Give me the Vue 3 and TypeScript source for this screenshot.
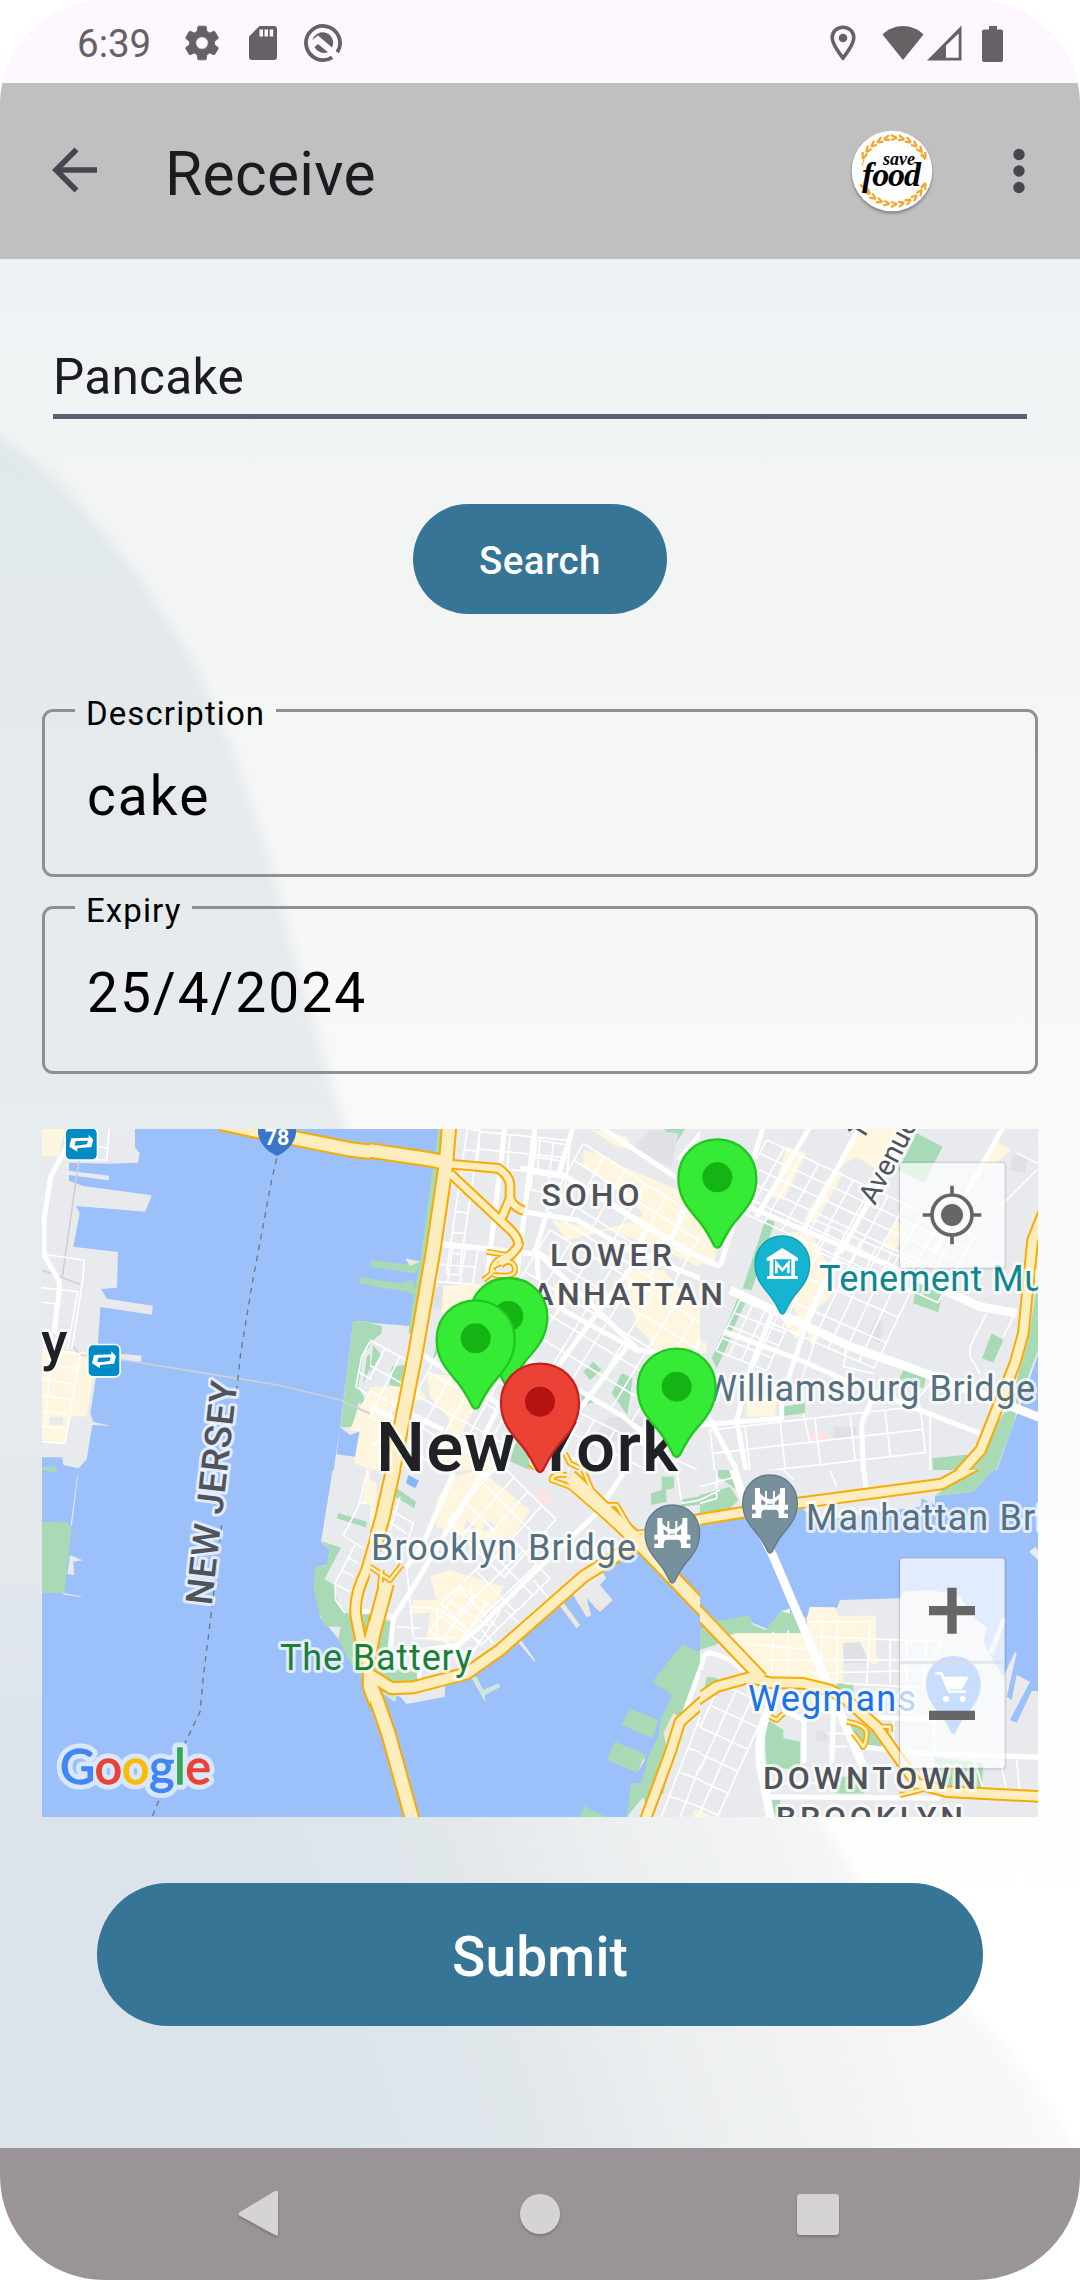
<script setup lang="ts">
interface Shape { c: string; d: string }
interface Tile { x: number; y: number; shapes: Shape[]; roads: Shape[]; highways: Shape[] }
interface Label { t: string; x: number; y: number; c: string; len?: number; rot?: number; size?: number }

// Street grid: nu lines stepped along u (each spanning v * nv) and the other way round.
function grid(ox: number, oy: number, ux: number, uy: number, vx: number, vy: number, nu: number, nv: number): string {
  let d = ''
  for (let i = 0; i <= nu; i++) d += `M${ox + ux * i} ${oy + uy * i}l${vx * nv} ${vy * nv}`
  for (let j = 0; j <= nv; j++) d += `M${ox + vx * j} ${oy + vy * j}l${ux * nu} ${uy * nu}`
  return d
}

const tiles: Tile[] = [
  {
    x: 0, y: 0,
    shapes: [
      { c: 'water', d: 'M0 0H1050V1080H0Z' },
      { c: 'land', d: 'M0 0H315V82L329 100 324 128 235 131 117 128V152L237 167 236 181 117 165V182L160 198 365 226 346 275 138 258 149 280 130 380 264 396 261 503 213 507 231 536 368 557 366 584 211 561 202 695 335 707 333 725 260 720 200 760 181 880 190 905 243 918 187 915 170 1018 146 1045 100 1035 97 1012H0Z' },
      { c: 'com', d: 'M36 27H105L85 110 36 108Z M36 687L202 700 180 830 170 890 125 887 105 970 36 960Z' },
      { c: 'land', d: 'M60 890H100L98 915H60Z' },
      { c: 'green', d: 'M30 1040H78V1050H30Z M1023 417H1050V445L1020 440Z M990 470L1050 483V500L988 490Z' },
      { c: 'land', d: 'M970 603L1050 607V1060H910L918 1000 930 925Z' },
      { c: 'green', d: 'M970 603L1050 607V650L1000 700 985 800 1010 850 985 850 967 920 932 922 940 850Z M1050 675L1010 710 1000 790Z' },
      { c: 'com', d: 'M1050 770L985 870 960 930 990 935 972 1030 1050 1060Z' },
      { c: 'water', d: 'M930 922L960 945 988 935 975 1010 920 1003Z' },
    ],
    roads: [
      { c: 'rail', d: 'M147 120L97 470M36 450L150 493M130 680L150 705 280 720 620 775 745 795 930 840 1050 895' },
      { c: 'st', d: 'M238 20L230 120 185 118M205 80L235 85M36 402L162 420 158 480 125 690M36 503L143 515 112 690M36 546L75 552M80 690L150 702 105 970 36 965M60 760L45 920M36 735L145 745M36 775L130 793M36 825L120 838M36 873L110 883M36 918L108 927' },
      { c: 'st', d: 'M1050 645L1020 665 995 710 978 800 1050 850M1020 665L1050 680M985 755L1040 790M1050 760L1000 850' },
      { c: 'av', d: 'M110 80L62 170 42 300 42 405 88 485 88 510 72 640' },
      { c: 'border', d: 'M740 115L725 180 665 500 632 700 620 810' },
    ],
    highways: [{ c: 'w46', d: 'M570 8L680 32 960 88 1060 100' }],
  },
  {
    x: 1020, y: 0,
    shapes: [
      { c: 'land', d: 'M0 0H1050V1080H0Z' },
      { c: 'water', d: 'M0 0H207L200 95 158 418 122 618 0 608Z' },
      { c: 'green', d: 'M207 20H222L135 640H115L135 500 150 430 190 130Z M5 420L100 432 155 425 135 460 0 440Z M0 477L90 490 130 480 135 530 115 515 0 497Z M0 610L35 618V640L0 668Z M10 675L33 705 0 755Z M65 740L105 735 90 800 58 795Z M205 640L240 700 190 715Z M430 950L470 965 480 1050 410 1020Z M670 725L695 750 660 780 640 755Z M755 760L788 775 772 885 725 820Z M1050 660L1025 740 1050 750Z M880 27H945L920 65Z M630 820L675 845 640 855Z' },
      { c: 'com', d: 'M640 90L700 105 760 140 925 210 1050 300V470L900 400 720 330 590 360 545 300 700 330 800 300 820 280 740 210 640 140Z M660 27L770 50 790 90 740 80Z M760 450L880 450 960 540 1050 580V650L880 700 800 620Z M830 640L980 640 960 690 850 690Z M215 500L340 490 320 550 215 580Z M0 800L140 800 170 830 60 880 100 1050H0Z M170 760L290 770 330 830 270 950 400 1050H180L240 900 180 830Z M550 490L620 500 560 590Z' },
      { c: 'dark', d: 'M840 30L925 40 905 140 780 95Z M180 500L220 500 215 570 170 560Z M720 890L830 890 800 950 640 990Z' },
      { c: 'tan', d: 'M105 415L152 425 120 437Z' },
    ],
    roads: [
      { c: 'st', d: grid(292, 27, 38, 4, -9, 62, 1, 7) + grid(330, 35, 90, 9, -4, 52, 3, 2) + grid(500, 60, 50, 8, -6, 50, 2, 3) },
      { c: 'st', d: grid(540, 330, 62, 38, -38, 62, 8, 5) + grid(640, 70, 62, 40, -28, 50, 6, 4) + grid(250, 620, 58, 32, -38, 68, 5, 5) },
      { c: 'st', d: grid(610, 870, 62, 30, -30, 58, 6, 3) + grid(0, 660, 45, 25, -30, 60, 3, 4) + grid(210, 380, 38, 3, -8, 52, 3, 2) },
      { c: 'av', d: 'M405 20L352 470M495 20L440 470M610 20L565 165M530 280L500 380 505 480M690 20L1050 260M450 145L580 165 1050 450M205 370L490 402M460 275L620 300 760 380 1050 500M490 385L800 685M150 700L430 880M560 560L800 690 880 700M120 880L220 930M340 950L430 780M1010 20L925 120M940 270L890 390M800 420L540 770M820 340L800 420M440 700L760 890 830 950M770 680L620 880 500 1050M1040 560L960 720M0 860L80 900M240 180L270 195' },
    ],
    highways: [
      { c: 'w12', d: 'M350 395L410 405 455 375M410 405Q360 425 365 460L340 480M370 465Q440 475 435 445T390 430T375 455M585 1000L600 1030 640 1050M480 1030L500 1050' },
      { c: 'w28', d: 'M240 160L400 310Q460 360 440 385T390 430M235 132L385 145Q420 170 420 195V235L395 295M420 235Q430 262 462 272' },
      { c: 'w46', d: 'M238 10L228 130 190 390 138 690 97 900 65 1070M-10 90L180 118 228 128' },
    ],
  },
  {
    x: 2010, y: 0,
    shapes: [
      { c: 'land', d: 'M0 0H1050V1080H0Z' },
      { c: 'green', d: 'M197 297L225 305 155 510 128 505Z M112 537L138 545 95 635 75 628Z M65 645L92 655 50 745 35 715Z M650 40L728 80 672 190 595 150Z M650 485L730 505 715 577 640 550Z M875 640L910 660 880 728 846 715Z M610 750L678 770 670 805 597 780Z M245 860L315 850V880L247 888Z M697 1015L840 1000V1060H700Z M1014 470V690L950 860 945 900 885 1060H800L930 850 985 660Z' },
      { c: 'water', d: 'M1030 660V1080H880L945 900Z' },
      { c: 'com', d: 'M260 80L320 100 250 240 215 230Z M480 27H640L560 170 470 110 400 150Z M400 150L430 160 345 310 310 300Z M260 340L330 330 400 470 400 520 370 550 300 610 270 530Z M140 830L230 830 225 890 140 890Z M590 300L620 340 580 395 550 380Z M880 60L935 90 850 160Z M0 300L60 340 40 440 0 430Z M320 620L360 640 335 680Z M240 590L310 630 290 660Z M0 660L20 670V700H0Z' },
      { c: 'dark', d: 'M940 100L985 110 975 160 930 150Z M530 590L550 610 540 670 500 650Z M400 920L470 920V950L400 960Z' },
      { c: 'pink', d: 'M340 930L387 938 385 965 328 962Z' },
    ],
    roads: [
      { c: 'st', d: grid(200, 60, 52, 24, -22, 40, 12, 5) + grid(345, 300, 46, 20, -36, 76, 7, 4) },
      { c: 'st', d: grid(120, 540, 38, 15, -18, 38, 4, 4) + grid(30, 930, 105, -12, 8, 70, 6, 2) + 'M350 650L300 790M440 690L430 740 520 760M860 580L810 680V710L840 760M940 590L910 650M780 520L860 560M710 770L650 840M690 890V1050M310 880L330 970M0 760L60 790M950 100L1014 130M880 280L1010 150' },
      { c: 'av', d: 'M190 20L120 250 60 440M330 20L170 290M480 20L310 330M600 80L420 400M910 20L700 400M120 250L430 380 600 450M0 410L60 440M220 570L150 750 110 900 140 1060M420 380L310 640 260 790M75 635L300 720 480 800 840 940M520 830L485 910 490 1060M0 915L245 895 245 830M20 880L110 1050' },
      { c: 'av2', d: 'M600 450L840 560 950 580M90 510L260 590 450 680 620 740 860 830 1030 897' },
    ],
    highways: [{ c: 'w36', d: 'M1040 255L998 360 970 640 945 730 842 990 770 1070' }],
  },
  {
    x: 0, y: 1050,
    shapes: [
      { c: 'water', d: 'M0 0H1050V1080H0Z' },
      { c: 'green', d: 'M36 155L110 157 125 170 103 370 36 368Z M45 0H80L75 8Z' },
      { c: 'land', d: 'M120 255L158 271 130 275 132 315 112 312Z M142 15L122 165 126 165 144 15Z M100 369L153 379V381L100 374Z' },
      { c: 'land', d: 'M908 0H1060V560H970L870 440 860 290 890 285 900 240 873 215Z' },
      { c: 'green', d: 'M873 213L933 233 883 328 913 345 925 400 950 430 1060 430V640L1000 630 950 560 925 510 932 470 885 470 868 430 850 350 857 290 888 287 900 240Z M925 130L1010 155 1008 172 920 145Z' },
      { c: 'com', d: 'M1015 0L1060 5V105L995 95Z' },
    ],
    roads: [
      { c: 'st', d: 'M1015 -5L985 110 940 197 1000 235M975 225L915 340 917 390 945 430M950 260L985 280M935 300L970 320M920 345L960 365M990 97L1040 105' },
      { c: 'av', d: 'M990 425H1030' },
      { c: 'border', d: 'M575 165L545 420 520 620 510 725 460 830 385 995 365 1045' },
    ],
    highways: [
      { c: 'w36', d: 'M1075 70L1010 300Q970 380 978 440L992 510 1015 590M1075 290L1010 540' },
      { c: 'w46', d: 'M1010 520L1020 600V650L1080 810' },
    ],
  },
  {
    x: 1020, y: 1050,
    shapes: [
      { c: 'water', d: 'M0 0H1050V1080H0Z' },
      { c: 'land', d: 'M0 0H1060V150L980 165 830 190 700 310 708 325 690 345 728 390 690 425 650 385 663 435 650 442 610 375 565 400 440 510 310 610 225 650V680L110 702 90 680 0 640Z' },
      { c: 'tan', d: 'M565 402L582 400 630 465 620 475Z M615 385H635L663 435 652 441Z M668 405L700 400 728 390 690 425Z' },
      { c: 'land', d: 'M440 512H455L495 570V577Z' },
      { c: 'com', d: 'M200 90L250 20 330 0 480 120 430 200 330 210 200 170Z M180 320L240 300 400 350 380 400 270 520 170 510 180 430 120 430 130 390 200 390Z M0 30L20 40V160L0 170Z' },
      { c: 'land', d: 'M290 150L320 175 280 180Z M345 150L380 165 340 185Z' },
      { c: 'green', d: 'M80 55L138 95 133 115 75 80Z M45 450L65 455 55 540 20 560 10 540Z M15 590L145 605 140 640 60 640 10 620Z M875 20H912V55L888 60 890 95 843 105V70L875 60Z M930 90L1060 65V95L935 110Z' },
      { c: 'lgreen', d: 'M302 620L320 620 340 660 385 640 392 650 345 675V695Z M30 665L80 675 75 697Z M120 580H145V605H120Z' },
      { c: 'land', d: 'M1060 490V1080H770L785 940 830 950 920 730 1000 560Z' },
      { c: 'green', d: 'M938 522L985 545 1060 440V540L1005 560 930 750 880 970 825 1000 820 980 770 1041 785 940 815 940 835 860 865 800 870 755 905 675 847 635Z M780 716L865 750 847 805 755 765Z M735 815L830 855 800 908 710 868Z M643 1008L715 1045H628Z M1010 620L1050 610V660L1000 660Z' },
      { c: 'com', d: 'M970 1020L1060 1035V1060H970Z' },
      { c: 'tan', d: 'M910 730L930 740 890 830 880 790Z M820 865L825 870 803 905Z' },
      { c: 'lake', d: 'M115 15L147 32 135 55 108 40Z' },
      { c: 'pink', d: 'M515 48L548 88 525 115 495 78Z' },
    ],
    roads: [
      { c: 'st', d: grid(390, -20, 42, 42, -52, 58, 4, 3) + grid(420, 200, 40, 42, -52, 50, 3, 4) + grid(270, 350, 40, 25, -30, 45, 3, 3) },
      { c: 'st', d: 'M110 290L130 500M120 410L200 415 290 470M200 415V510M130 505H260M60 120L130 160 110 220M50 150L110 190M90 80L60 180M80 470L150 475M300 340L310 400 280 430M335 480L370 520M405 420L470 480M490 330L540 390M920 0L935 100M935 100L1050 80' },
      { c: 'st', d: grid(1010, 690, 50, 18, -28, 72, 3, 5) },
      { c: 'av', d: 'M250 10L160 220 110 290M350 -10L220 200 130 350 70 445 60 540M50 435L75 445M760 10L700 100M680 130L500 300 330 470 265 525 130 545M145 570L150 630M1060 545H1010L935 750M330 20L370 0' },
    ],
    highways: [
      { c: 'w12', d: 'M590 15Q545 10 545 30L600 50 790 215M640 0L665 60 790 190 825 185M690 120L720 150M715 105H740L790 190M0 290L60 330 95 285M30 350L35 300' },
      { c: 'w46', d: 'M72 -10L38 140 10 240M50 340L10 490 -15 620M-10 620L20 690 55 790 130 1060' },
      { c: 'w40', d: 'M0 615L65 655 130 652 290 610 390 540 640 320 720 270 830 200 980 152 1070 132' },
      { c: 'w36', d: 'M1070 652L1020 675 930 755 900 850 822 1060' },
      { c: 'w46', d: 'M600 20L790 200 1070 490' },
    ],
  },
  {
    x: 2010, y: 1050,
    shapes: [
      { c: 'water', d: 'M0 0H1050V1080H0Z' },
      { c: 'land', d: 'M0 0H880L820 65 705 78V105L665 85 663 110 500 130 350 155 290 100 0 160Z' },
      { c: 'green', d: 'M815 0H880L822 65 705 77 740 50Z M50 0H100L110 60 55 20Z M0 75L90 50 115 90 90 115 0 130Z' },
      { c: 'land', d: 'M0 530L45 525 145 440 160 460 210 480 245 420 320 445 330 410 410 415 420 390 600 385 610 365 690 360 750 370 780 380 830 450 860 470 850 520 910 620 945 545 950 550 920 680 935 690 950 615 990 635 930 750 950 758 995 663H1014V1080H0Z' },
      { c: 'land', d: 'M905 445L918 447 880 555 865 545Z M1005 230L1014 240V270L988 245Z' },
      { c: 'green', d: 'M0 480L20 460 145 435 160 465 195 480 245 420 325 450 310 490 110 490 45 525 0 540Z M190 740L250 780V805L300 815V900L200 890Z M410 640H460V665H410Z M20 620L55 625 10 670Z M430 750L545 790V830L480 840 490 870Z M700 860L850 880 845 960 720 950Z M200 990H240V1050H210Z M400 930L500 900 490 970 410 970Z' },
      { c: 'com', d: 'M110 490L330 490 320 450 330 412H405L415 437 527 438 528 560 537 575 525 583 480 570 430 515V640H200L110 560 70 500Z M0 1020L50 1050H0Z M245 425L270 415V430Z' },
      { c: 'dark', d: 'M430 520L480 515 510 580 430 580Z M350 780L380 790 385 820 345 810Z' },
    ],
    roads: [
      { c: 'st', d: grid(60, 640, 48, 22, -30, 66, 3, 6) + 'M0 50L110 20M0 100L50 85 50 0M320 455H510M368 450L362 590M412 450L410 640M510 455L500 640M220 485L215 610M265 480V610M340 500L725 515 700 560M130 520L330 540M200 570L700 570M330 610L700 600M430 640L700 655M680 515L670 650M620 510V650M570 505V640M385 790H440M385 830H440M580 740V850M700 750L705 860M900 870L920 960M950 870L960 970M820 860L850 960M210 940H420M250 0L280 30M390 0L410 50M0 90L60 60' },
      { c: 'av', d: 'M490 -10L500 70M0 600L10 560Q20 545 40 550L90 570 150 615M250 720L312 750V880M400 740L395 880M500 740L710 750M490 830L650 850 1020 862M210 980L720 985M380 650L400 740' },
      { c: 'av2', d: 'M205 720Q170 800 182 890L215 1060M95 -15L130 80 220 260 390 660 430 750 490 890' },
    ],
    highways: [
      { c: 'w12', d: 'M210 740L230 750 250 730M440 755Q500 765 500 790T490 830L460 790M540 770H570V785M600 975L700 950M75 635L150 625' },
      { c: 'w40', d: 'M-30 400L185 625' },
      { c: 'w36', d: 'M-10 690L50 650 150 622 210 638 310 640 390 660 440 690 530 770 650 940 740 965 1030 980M-10 150L290 100 725 42 830 -15' },
    ],
  },
]

const labels: Label[] = [
  { t: 'SOHO', x: 541.5, y: 1206, c: 'area', len: 98 },
  { t: 'LOWER', x: 550, y: 1265.5, c: 'area', len: 122 },
  { t: 'MANHATTAN', x: 501, y: 1304.5, c: 'area', len: 222 },
  { t: 'DOWNTOWN', x: 763, y: 1789, c: 'area', len: 213 },
  { t: 'BROOKLYN', x: 776, y: 1829, c: 'area', len: 187 },
  { t: 'New York', x: 376, y: 1471, c: 'city', len: 302 },
  { t: 'y', x: 41, y: 1360, c: 'city small' },
  { t: 'Tenement Mu', x: 819, y: 1290.5, c: 'poi teal', len: 225 },
  { t: 'Williamsburg Bridge', x: 705, y: 1400.5, c: 'poi slate', len: 330 },
  { t: 'Manhattan Bri', x: 806, y: 1530, c: 'poi slate', len: 239 },
  { t: 'Brooklyn Bridge', x: 371, y: 1559.5, c: 'poi slate', len: 265 },
  { t: 'The Battery', x: 280, y: 1670, c: 'poi park', len: 192 },
  { t: 'Wegmans', x: 748, y: 1711, c: 'poi blue', len: 168 },
  { t: 'NEW JERSEY', x: 211.5, y: 1606, c: 'state', len: 225, rot: -83.4 },
  { t: 'Avenue A', x: 875, y: 1206, c: 'street', rot: -62.3 },
]

const pins = [
  { x: 1435, y: 588, red: false },
  { x: 1337, y: 655, red: false },
  { x: 1530, y: 845, red: true },
  { x: 1940, y: 800, red: false },
  { x: 2062, y: 172, red: false },
]
const pinPath = 'M0-114C65-114 117-65 117 3C117 52 96 84 67 117C34 152 20 184 9 206Q0 216-9 206C-20 184-34 152-67 117C-96 84-117 52-117 3C-117-65-65-114 0-114Z'

const leaves = Array.from({ length: 11 }, (_, i) => -62 + i * 12.4)
const fields = [
  { label: 'Description', value: 'cake' },
  { label: 'Expiry', value: '25/4/2024' },
]
const googleLetters = [
  ['G', '#4285f4'], ['o', '#ea4335'], ['o', '#fbbc04'], ['g', '#4285f4'], ['l', '#34a853'], ['e', '#ea4335'],
]
</script>

<template>
  <div class="phone">
    <header class="status">
      <span class="time">6:39</span>
      <svg class="gear" width="42" height="42" viewBox="0 0 24 24"><path d="M19.14 12.94c.04-.3.06-.61.06-.94s-.02-.64-.07-.94l2.03-1.58a.49.49 0 0 0 .12-.61l-1.92-3.32a.49.49 0 0 0-.59-.22l-2.39.96a7 7 0 0 0-1.62-.94l-.36-2.54a.48.48 0 0 0-.48-.41h-3.84a.48.48 0 0 0-.47.41l-.36 2.54c-.59.24-1.13.57-1.62.94l-2.39-.96a.48.48 0 0 0-.59.22L2.74 8.87a.48.48 0 0 0 .12.61l2.03 1.58c-.05.3-.09.63-.09.94s.02.64.07.94l-2.03 1.58a.49.49 0 0 0-.12.61l1.92 3.32c.12.22.37.29.59.22l2.39-.96c.5.38 1.03.7 1.62.94l.36 2.54c.05.24.24.41.48.41h3.84c.24 0 .44-.17.47-.41l.36-2.54a7 7 0 0 0 1.62-.94l2.39.96c.22.08.47 0 .59-.22l1.92-3.32a.48.48 0 0 0-.12-.61zM12 15.6a3.6 3.6 0 1 1 0-7.2 3.6 3.6 0 0 1 0 7.2z" /></svg>
      <svg class="sd" width="28" height="36" viewBox="0 0 28 36"><path d="M10.5 1H25a3 3 0 0 1 3 3v28a3 3 0 0 1-3 3H3a3 3 0 0 1-3-3V11.500zM10.500 4.500v7h3.500v-7zM15.500 4.500v7H19v-7zM20.700 4.500v7h3.500v-7z" fill-rule="evenodd" /></svg>
      <svg class="quick" width="40" height="40" viewBox="-20 -20 40 40">
        <path class="ring" d="M9.200 14.300A17 17 0 1 1 14.300 9.200" />
        <path d="M-10.500-3L-5-7.500 9 4.500A10.500 10.500 0 1 0-10.500-3z" />
        <path d="M-8.500 4L-5 1 5 9.300A10.500 10.500 0 0 1-8.500 4z" />
        <path class="tail" d="M5 5.500L14.500 14.500" />
      </svg>
      <span class="grow"></span>
      <svg class="loc" width="26" height="36" viewBox="0 0 26 36"><path class="ring2" d="M13 2.200C6.800 2.200 2.200 6.800 2.200 12.500 2.200 20 13 33 13 33S23.800 20 23.800 12.500C23.800 6.800 19.200 2.200 13 2.200z" /><circle cx="13" cy="13" r="4.300" /></svg>
      <svg class="wifi" width="42" height="36" viewBox="0 0 42 36"><path d="M21 35L.5 9.500C12-2 30-2 41.500 9.500z" /></svg>
      <svg class="cell" width="35" height="36" viewBox="0 0 35 36"><path d="M0 35.500L34.500.5v35zM19 20.500V32.800H31.700V8.500z" fill-rule="evenodd" /></svg>
      <svg class="bat" width="22" height="37" viewBox="0 0 22 37"><path d="M7 1h8v3.500h4a2 2 0 0 1 2 2V35a2 2 0 0 1-2 2H2a2 2 0 0 1-2-2V6.500a2 2 0 0 1 2-2h5z" /></svg>
    </header>

    <div class="appbar">
      <svg class="back" width="46" height="46" viewBox="0 0 46 46"><path d="M24.500 2.500L4 23 24.500 43.500M4.500 23H45" /></svg>
      <h1>Receive</h1>
      <svg class="logo" width="90" height="90" viewBox="-45 -45 90 90">
        <circle class="disc" r="40.300" />
        <g class="wheat">
          <path d="M-29.500-5A32 32 0 0 1-24-21M33-11A33 33 0 0 0 28-22M-29 14A33 33 0 0 0-23 22M33 11A33 33 0 0 1 28 21" />
          <g v-for="a in leaves" :key="'t' + a" :transform="`translate(2 1) rotate(${a})`">
            <path class="leaf" :d="a < 0 ? 'M-3-34L3-37M-3-34L3-32' : 'M3-34L-3-37M3-34L-3-32'" />
          </g>
          <g v-for="a in leaves" :key="'b' + a" :transform="`translate(2-1) rotate(${a})`">
            <path class="leaf" d="M3 34L-3 37M3 34L-3 32" />
          </g>
        </g>
        <text class="save" x="-9" y="-6" textLength="32">save</text>
        <text class="food" x="-30" y="14.500" textLength="59">food</text>
      </svg>
      <svg class="more" width="12" height="46" viewBox="0 0 12 46"><circle cx="6" cy="6.500" r="5.700" /><circle cx="6" cy="23" r="5.700" /><circle cx="6" cy="39.500" r="5.700" /></svg>
    </div>

    <main>
      <svg class="backdrop" viewBox="0 259 1080 1889" preserveAspectRatio="none" aria-hidden="true">
        <defs>
          <linearGradient id="base" x1="0" y1="0" x2="0" y2="1">
            <stop offset="0" stop-color="#edf2f5" /><stop offset=".1" stop-color="#f0f4f3" /><stop offset=".25" stop-color="#f5f6f6" /><stop offset=".45" stop-color="#f9f9f8" /><stop offset=".8" stop-color="#fefefd" /><stop offset="1" stop-color="#fff" />
          </linearGradient>
          <linearGradient id="leaf" x1="0" y1="0" x2="0" y2="1">
            <stop offset="0" stop-color="#e0e8ea" /><stop offset=".3" stop-color="#e6eaed" /><stop offset=".6" stop-color="#e7ecee" /><stop offset="1" stop-color="#dce3ea" />
          </linearGradient>
          <linearGradient id="low" gradientUnits="userSpaceOnUse" x1="300" y1="2060" x2="960" y2="1850">
            <stop offset="0" stop-color="#dce3eb" /><stop offset=".3" stop-color="#e1e7ea" /><stop offset=".55" stop-color="#edf0f1" /><stop offset=".8" stop-color="#f4f5f5" /><stop offset="1" stop-color="#f9f9f8" />
          </linearGradient>
          <filter id="soft" x="-10%" y="-10%" width="120%" height="120%"><feGaussianBlur stdDeviation="6" /></filter>
        </defs>
        <rect y="259" width="1080" height="1889" fill="url(#base)" />
        <g filter="url(#soft)">
          <path d="M-20 425Q40 460 75 500L138 575 193 660 230 745 268 855 296 960 345 1130V1850H-20Z" fill="url(#leaf)" />
          <path d="M-20 1700H760Q830 1870 960 2000T1080 2200H-20Z" fill="url(#low)" />
        </g>
      </svg>

      <div class="search-field">Pancake</div>
      <button class="search">Search</button>
      <fieldset v-for="f in fields" :key="f.label">
        <legend>{{ f.label }}</legend>
        <div class="value">{{ f.value }}</div>
      </fieldset>

      <svg class="map" width="996" height="688" viewBox="36 27 2988 2064">
        <svg v-for="(t, i) in tiles" :key="i" :x="t.x" :y="t.y" :width="i % 3 === 2 ? 1050 : 1020" :height="i < 3 ? 1050 : 1080">
          <path v-for="(s, k) in t.shapes" :key="'s' + k" :class="s.c" :d="s.d" />
          <path v-for="(s, k) in t.roads" :key="'r' + k" :class="['line', s.c]" :d="s.d" />
          <path v-for="(s, k) in t.highways" :key="'c' + k" :class="['case', s.c]" :d="s.d" />
          <path v-for="(s, k) in t.highways" :key="'h' + k" :class="['fill', s.c]" :d="s.d" />
        </svg>

        <g transform="translate(741 40)">
          <path d="M-57-40V0Q-50 45 0 68 50 45 57 0V-40Z" fill="#3a76c7" />
          <text class="shield" x="-37" y="35" textLength="74" lengthAdjust="spacingAndGlyphs">78</text>
        </g>
        <g v-for="p in [[154, 72], [222, 722]]" :key="p[0]" :transform="`translate(${p[0]} ${p[1]})`">
          <rect x="-51" y="-51" width="102" height="102" rx="18" fill="#fff" />
          <rect x="-46" y="-46" width="92" height="92" rx="13" fill="#008bc7" />
          <path d="M-30-17L22-19V-28L36-13 30 9-12 13V23L-36 8Z M-17-9L-20 5-6 4 17 1 20-10Z" fill="#fff" fill-rule="evenodd" />
        </g>

        <g transform="translate(-90 -3360) scale(3)">
          <text v-for="l in labels" :key="l.t" :class="l.c" :x="l.x" :y="l.y" :textLength="l.len" :transform="l.rot ? `rotate(${l.rot} ${l.x} ${l.y})` : undefined">{{ l.t }}</text>
        </g>
        <path d="M445 32L462 20 500 44M475 30L482 20" transform="translate(2010 0)" class="glyph" />

        <g transform="translate(2257 430)">
          <path :d="pinPath" transform="scale(.7 .72)" fill="#15b5d1" stroke="#129eb5" stroke-width="6" />
          <path d="M-47-16L0-46 47-16V-8H38V38H46V47H-46V38H-38V-8H-47Z M-27-12V38H27V-12Z" fill="#fff" fill-rule="evenodd" />
          <path d="M-18 30V-1L0 20 18-1V30" fill="none" stroke="#fff" stroke-width="8" />
        </g>
        <g v-for="b in [[1927, 1237], [2220, 1147]]" :key="b[0]" :transform="`translate(${b[0]} ${b[1]})`">
          <path :d="pinPath" transform="scale(.7 .72)" fill="#78909c" stroke="#607d8b" stroke-width="6" />
          <path d="M-45-43H-30V-27Q0 8 30-27V-43H45V7H54V22H43V34H54V47H26V36Q26 22 16 22H-16Q-26 22-26 36V47H-54V34H-43V22H-54V7H-45Z M-26-10V7H-14V0Z M-8 4V7H8V4Z M26-10V7H14V0Z" fill="#fff" fill-rule="evenodd" />
          <path d="M-12-34V0M12-34V0" stroke="#fff" stroke-width="6" />
        </g>
        <path :d="pinPath" transform="translate(2770 1690) scale(.7 .72)" fill="#4b8df8" />

        <g class="control">
          <rect class="edge wide" x="2607" y="127" width="320" height="322" rx="12" />
          <rect class="edge wide" x="2607" y="1314" width="320" height="636" rx="12" />
          <rect class="edge" x="2609" y="128" width="316" height="317" rx="10" />
          <rect class="edge" x="2609" y="1315" width="316" height="631" rx="10" />
          <rect x="2610" y="128" width="314" height="314" rx="8" />
          <rect x="2610" y="1315" width="314" height="628" rx="8" />
        </g>
        <rect x="2610" y="1622" width="314" height="10" fill="#d9dde2" opacity=".6" />
        <g transform="translate(2766 285)" fill="none" stroke="#666" stroke-width="11">
          <circle r="60" /><circle r="33" fill="#666" stroke="none" />
          <path d="M0-88V-60M0 88V60M-88 0H-60M88 0H60" />
        </g>
        <g transform="translate(2770 1690)" fill="none" stroke="#fff" stroke-width="8">
          <path d="M-54-30H-36L-12 25H38" /><path d="M-32-18H43L24 16H-18Z" fill="#fff" stroke-width="4" />
          <circle cx="-22" cy="47" r="9" fill="#fff" stroke="none" /><circle cx="28" cy="47" r="9" fill="#fff" stroke="none" />
        </g>
        <path d="M2697 1472H2835M2766 1403V1541M2697 1786H2835" stroke="#666" stroke-width="28" fill="none" />

        <g v-for="p in pins" :key="p.x" :transform="`translate(${p.x} ${p.y})`" :class="['marker', { red: p.red }]">
          <path :d="pinPath" /><circle r="45" />
        </g>

        <g transform="translate(-90 -3360) scale(3)">
          <text v-for="layer in ['halo', 'ink']" :key="layer" :class="['google', layer]" x="60" y="1783.500" textLength="151" lengthAdjust="spacingAndGlyphs"><tspan v-for="(g, i) in googleLetters" :key="i" :fill="layer === 'ink' ? g[1] : '#d9e7fd'" :stroke="layer === 'ink' ? g[1] : '#d9e7fd'">{{ g[0] }}</tspan></text>
        </g>
      </svg>

      <button class="submit">Submit</button>
    </main>

    <nav>
      <svg width="48" height="52" viewBox="1 0 48 52"><path d="M42 5.500V45Q42 49 39 47L4 28Q1 26 4 24L39 3Q42 2 42 5.500Z" /></svg>
      <svg width="48" height="52" viewBox="0 0 48 52"><circle cx="24" cy="26" r="20" /></svg>
      <svg width="48" height="52" viewBox="1 0 48 52"><rect x="3" y="6" width="42" height="41" rx="3.500" /></svg>
    </nav>
  </div>
</template>

<style>
body { margin: 0; background: #fff; }
</style>

<style scoped>
.phone { width: 1080px; height: 2280px; border-radius: 104px; overflow: hidden; display: flex; flex-direction: column; font-family: Roboto, "Liberation Sans", sans-serif; color: #1d1b20; }
.status { height: 83px; flex: none; box-sizing: border-box; background: #fef7ff; display: flex; align-items: center; padding: 3px 77px 0; fill: #656165; color: #656165; }
.time { font-size: 38.500px; width: 104px; line-height: 1; padding-top: 3px; }
.gear { margin-right: 26px; }
.gear path { stroke: #656165; stroke-width: .5; }
.sd { margin-right: 27px; }
.quick { margin-left: -1px; }
.ring { fill: none; stroke: #656165; stroke-width: 3.800; }
.tail { stroke: #fef7ff; stroke-width: 3; fill: none; }
.ring2 { fill: none; stroke: #656165; stroke-width: 3.600; }
.grow { flex: 1; }
.loc { margin-right: 26px; }
.wifi { margin-right: 3px; }
.cell { margin-right: 20px; }
.bat { margin-right: -1px; }

.appbar { height: 176px; flex: none; background: #c0c0c0; display: flex; align-items: center; padding: 0 55px 0 52px; box-sizing: border-box; }
.back { fill: none; stroke: #49454f; stroke-width: 5.600; margin-top: -3px; }
h1 { font-size: 60.500px; font-weight: 400; margin: 7px 0 0 67px; flex: 1; line-height: 70px; letter-spacing: .3px; }
.logo { margin-right: 76px; }
.disc { fill: #fff; filter: drop-shadow(0 2px 1.500px rgba(0, 0, 0, .35)); }
.wheat { fill: none; stroke: #f5a52a; stroke-width: 1; }
.leaf { stroke-width: 2.200; }
.save, .food { font-family: "Liberation Serif", serif; font-style: italic; font-weight: 700; }
.save { font-size: 18px; }
.food { font-size: 34px; }
.more { fill: #49454f; }

main { height: 1889px; flex: none; position: relative; display: flex; flex-direction: column; align-items: center; }
.backdrop { position: absolute; inset: 0; width: 1080px; height: 1889px; z-index: 0; }
main > :not(.backdrop) { position: relative; z-index: 1; }
.search-field { width: 974px; height: 160px; padding-top: 92px; box-sizing: border-box; border-bottom: 5.500px solid #625b71; font-size: 49.500px; line-height: 52px; letter-spacing: .3px; }
button { border: 0; background: #367596; color: #fff; font-family: inherit; font-weight: 500; }
.search { width: 254px; height: 110px; border-radius: 55px; font-size: 38.500px; letter-spacing: .4px; margin: 85px 0 76px; padding: 3px 0 0; }
fieldset { width: 996px; height: 187px; box-sizing: border-box; border: 3px solid #8e9091; border-radius: 11px; margin: 0 0 10px; padding: 0 30px; color: #000; min-width: 0; }
legend { height: 40px; line-height: 48px; font-size: 33px; letter-spacing: 1.100px; padding: 0 10.500px 0 11px; margin-left: 0; }
.value { font-size: 55px; letter-spacing: 2.050px; line-height: 64px; padding: 34px 0 0 12px; }
.map { margin-top: 45px; flex: none; display: block; }
.submit { width: 886px; height: 143px; border-radius: 72px; font-size: 55px; letter-spacing: .2px; margin-top: 66px; padding: 4px 0 0; }

.water { fill: #9cc0fa; }
.land { fill: #e8eaed; }
.dark { fill: #dfe1e6; }
.com { fill: #fef6df; }
.tan { fill: #f0e7da; }
.green { fill: #a8dab5; }
.lgreen { fill: #cfe6da; }
.pink { fill: #fce4e4; }
.lake { fill: #8ab4f8; }
.line { fill: none; stroke: #fff; stroke-linejoin: round; }
.st { stroke-width: 5; }
.av { stroke-width: 15; }
.av2 { stroke-width: 26; }
.rail { stroke: #cdd1d6; stroke-width: 5; }
.border { stroke: #70757f; stroke-width: 4; stroke-dasharray: 17 16; }
.case, .fill { fill: none; stroke-linejoin: round; }
.case { stroke: #f9ab00; }
.fill { stroke: #feedbe; }
.case.w12 { stroke-width: 18; }
.fill.w12 { stroke-width: 8; }
.case.w28 { stroke-width: 32; }
.fill.w28 { stroke-width: 20; }
.case.w36 { stroke-width: 38; }
.fill.w36 { stroke-width: 26; }
.case.w40 { stroke-width: 42; }
.fill.w40 { stroke-width: 30; }
.case.w46 { stroke-width: 49; }
.fill.w46 { stroke-width: 37; }

text { paint-order: stroke; stroke-linejoin: round; }
.area, .city, .poi, .state, .street { stroke: rgba(255, 255, 255, .7); stroke-width: 6px; }
.area { font-size: 32px; font-weight: 500; fill: #50545a; }
.city { font-size: 69px; font-weight: 500; fill: #202124; }
.small { font-size: 54px; }
.poi { font-size: 36px; }
.teal { fill: #0e8790; }
.slate { fill: #557080; }
.park { fill: #188038; }
.blue { fill: #1a73e8; }
.state { font-size: 37px; font-weight: 500; fill: #50545a; }
.street { font-size: 28.500px; fill: #50545a; }
.glyph { fill: none; stroke: #50545a; stroke-width: 8; }
.shield { font-size: 66px; font-weight: 700; fill: #fff; }
.control rect { fill: rgba(255, 255, 255, .7); }
.control .edge { fill: none; stroke: rgba(0, 0, 0, .09); stroke-width: 4; }
.control .wide { stroke: rgba(0, 0, 0, .04); stroke-width: 8; }
.marker path { fill: #36eb36; stroke: #22c522; stroke-width: 7; }
.marker circle { fill: #14b414; }
.marker.red path { fill: #ea4335; stroke: #c5221f; }
.marker.red circle { fill: #b31412; }
.google { font-family: Lato, sans-serif; font-size: 48px; }
.ink { stroke-width: 1.300px; }
.halo { stroke-width: 11px; }

nav { height: 132px; flex: none; background: #9a9499; display: flex; justify-content: space-between; padding: 40px 237px 0; box-sizing: border-box; fill: #d6d3d7; }
nav svg { filter: drop-shadow(0 2px 1px rgba(0, 0, 0, .2)); }
</style>
